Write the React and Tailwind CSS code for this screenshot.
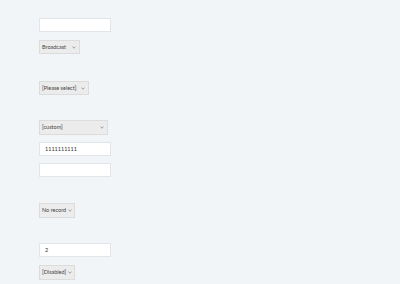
import React from 'react';

function TextBox({ value, className = '' }) {
    return (
        <div className={`w-[72px] h-[14px] bg-white border border-[#e1e5ea] flex items-center px-[5px] text-[5.5px] text-[#333] ${className}`}>
            {value}
        </div>
    );
}

function Select({ label, width, className = '' }) {
    return (
        <div className={`h-[14px] bg-[#ececec] border border-[#dcdcdc] flex items-center justify-between pl-[2px] pr-[3px] text-[5.5px] text-[#444] whitespace-nowrap ${width} ${className}`}>
            <span>{label}</span>
            <svg width="4" height="3" viewBox="0 0 4 3" className="shrink-0 ml-[2px]">
                <path d="M0.5 0.8 L2 2.2 L3.5 0.8" fill="none" stroke="#777" strokeWidth="0.7" />
            </svg>
        </div>
    );
}

export default function App() {
    return (
        <div className="w-[400px] h-[284px] bg-[#f2f5f8] overflow-hidden" style={{ fontFamily: 'Lato, "Liberation Sans", sans-serif' }}>
            <div className="flex flex-col items-start pl-[39px] pt-[18px]">
                <TextBox value="" className="h-[13px]" />
                <Select label="Broadcast" width="w-[41px]" className="mt-[8px]" />
                <Select label="[Please select]" width="w-[50px]" className="mt-[27px]" />
                <Select label="[custom]" width="w-[69px]" className="mt-[25px] h-[15px]" />
                <TextBox value="1111111111" className="mt-[7px]" />
                <TextBox value="" className="mt-[7px]" />
                <Select label="No record" width="w-[36px]" className="mt-[26px] h-[15px]" />
                <TextBox value="2" className="mt-[25px]" />
                <Select label="[Disabled]" width="w-[36px]" className="mt-[8px] h-[15px]" />
            </div>
        </div>
    );
}
